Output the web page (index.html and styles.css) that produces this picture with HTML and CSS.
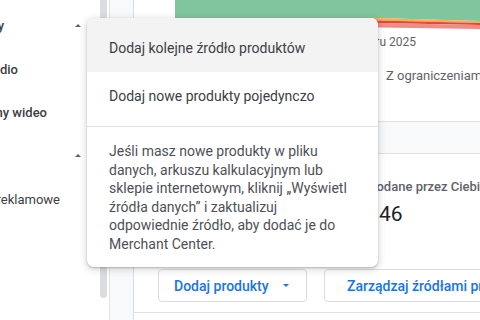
FILE: index.html
```html
<!DOCTYPE html>
<html lang="pl">
<head>
    <meta charset="UTF-8">
    <meta name="viewport" content="width=device-width, initial-scale=1.0">
    <title>Produkty - Merchant Center</title>
    <link rel="stylesheet" href="styles.css">
</head>
<body>

    <!-- Side navigation (scrolled, only the right edge is visible) -->
    <nav class="sidenav">
        <div class="nav-row nav-head"><span class="nav-label">Produkty</span><span class="caret-up"></span></div>
        <div class="nav-row"><span class="nav-label strong">Studio</span></div>
        <div class="nav-row"><span class="nav-label strong">Filmy wideo</span></div>
        <div class="nav-row nav-head"><span class="nav-label">Marketing</span><span class="caret-up"></span></div>
        <div class="nav-row"><span class="nav-label">Materiały reklamowe</span></div>
    </nav>
    <div class="scroll-track"><div class="scroll-thumb"></div></div>

    <!-- Main content -->
    <main class="main">
        <section class="card">
            <div class="chart">
                <svg width="305" height="30" viewBox="0 0 305 30">
                    <path d="M0 0 H305 V21 L203 18 H0 Z" fill="#7fc59d"/>
                    <path d="M0 18 H203 L305 21 V23 L203 20.5 H0 Z" fill="#f5b04a"/>
                    <path d="M0 20.5 H203 L305 23 V25 L203 23 H0 Z" fill="#e8453c"/>
                    <path d="M0 23 H203 L305 25 V29 L203 27.5 H0 Z" fill="#f08c86"/>
                </svg>
            </div>
            <div class="chart-caption">Dane z pomiaru 2025</div>
            <div class="legend">
                <span class="legend-item">Z ograniczeniami</span>
            </div>

            <div class="table-band"></div>

            <div class="stats">
                <div class="stat">
                    <p class="stat-label">Dodane przez Ciebie</p>
                    <p class="stat-value">46</p>
                </div>
            </div>

            <div class="actions">
                <button class="btn-outline btn-first">Dodaj produkty <span class="caret-down"></span></button>
                <button class="btn-outline">Zarządzaj źródłami produktów</button>
            </div>
        </section>
    </main>

    <!-- Add products menu -->
    <div class="menu">
        <ul class="menu-list">
            <li class="menu-item active">Dodaj kolejne źródło produktów</li>
            <li class="menu-item">Dodaj nowe produkty pojedynczo</li>
        </ul>
        <p class="menu-note">Jeśli masz nowe produkty w pliku danych, arkuszu kalkulacyjnym lub sklepie internetowym, kliknij „Wyświetl źródła danych” i zaktualizuj odpowiednie źródło, aby dodać je do Merchant Center.</p>
    </div>

</body>
</html>
```

FILE: styles.css
```css
/* Global Styles */
body {
    font-family: Roboto, "Liberation Sans", Arial, sans-serif;
    margin: 0;
    padding: 0;
    width: 480px;
    height: 320px;
    overflow: hidden;
    display: flex;
    background-color: #fff;
    color: #3c4043;
}

p {
    margin: 0;
}

/* Side navigation */
.sidenav {
    width: 100px;
    flex-shrink: 0;
    padding-top: 4px;
    display: flex;
    flex-direction: column;
    overflow: hidden;
}

.nav-row {
    height: 43.5px;
    display: flex;
    align-items: center;
    justify-content: flex-end;
    position: relative;
    font-size: 13px;
    white-space: nowrap;
}

.nav-label {
    width: 100px;
    display: flex;
    justify-content: flex-end;
    box-sizing: border-box;
}

.nav-row:nth-child(1) .nav-label { padding-right: 96px; }
.nav-row:nth-child(2) .nav-label { padding-right: 82px; }
.nav-row:nth-child(3) .nav-label { padding-right: 53px; }
.nav-row:nth-child(4) .nav-label { padding-right: 140px; }
.nav-row:nth-child(5) .nav-label { padding-right: 40px; }

.nav-label.strong,
.nav-head .nav-label {
    font-weight: 500;
}

.caret-up {
    position: absolute;
    left: 75px;
    top: 50%;
    margin-top: -2px;
    width: 0;
    height: 0;
    border-left: 3.5px solid transparent;
    border-right: 3.5px solid transparent;
    border-bottom: 3.5px solid #5f6368;
}

.scroll-track {
    width: 9px;
    flex-shrink: 0;
}

.scroll-thumb {
    width: 7px;
    height: 298px;
    background-color: #dadce0;
    border-radius: 0 0 4px 4px;
}

/* Main */
.main {
    flex: 1;
    border-left: 1px solid #e3e3e3;
    background-color: #f8f9fa;
    padding-left: 23px;
    display: flex;
    overflow: hidden;
}

.card {
    flex: 1;
    background-color: #fff;
    border-left: 1px solid #dadce0;
    display: flex;
    flex-direction: column;
}

.chart {
    margin-left: 41px;
    height: 30px;
}

.chart svg {
    display: block;
}

.chart-caption {
    width: 282px;
    height: 24px;
    line-height: 24px;
    font-size: 12px;
    color: #5f6368;
    text-align: right;
    white-space: nowrap;
}

.legend {
    height: 42px;
    display: flex;
    align-items: center;
    padding-left: 252px;
    font-size: 13px;
    color: #5f6368;
    white-space: nowrap;
}

.table-band {
    margin-top: 25px;
    height: 31px;
    background-color: #f8f9fa;
    border-top: 1px solid #e0e0e0;
    border-bottom: 1px solid #e0e0e0;
}

.stats {
    padding: 24px 0 0 234px;
    height: 91px;
    white-space: nowrap;
}

.stat-label {
    font-size: 13px;
    font-weight: 500;
    line-height: 18px;
    color: #5f6368;
}

.stat-value {
    margin-top: 3px;
    padding-left: 11px;
    font-size: 21px;
    line-height: 30px;
    color: #202124;
}

/* Buttons */
.actions {
    display: flex;
    gap: 17px;
    padding-left: 24px;
    padding-bottom: 10px;
    border-bottom: 1px solid #e0e0e0;
}

.btn-outline {
    height: 33px;
    padding: 0 22px;
    font-family: Roboto, "Liberation Sans", Arial, sans-serif;
    font-size: 14px;
    font-weight: 500;
    color: #1a73e8;
    background-color: #fff;
    border: 1px solid #dadce0;
    border-radius: 4px;
    white-space: nowrap;
    display: flex;
    align-items: center;
    flex-shrink: 0;
}

.btn-first {
    width: 149px;
    padding: 0 0 0 15px;
}

.caret-down {
    margin-left: 14px;
    width: 0;
    height: 0;
    border-left: 3.5px solid transparent;
    border-right: 3.5px solid transparent;
    border-top: 3.5px solid #1a73e8;
}

/* Menu overlay */
.menu {
    position: absolute;
    left: 87px;
    top: 18px;
    width: 291px;
    background-color: #fff;
    border-radius: 7px;
    box-shadow: 0 1px 2px rgba(60, 64, 67, 0.3), 0 2px 6px 2px rgba(60, 64, 67, 0.15);
    overflow: hidden;
}

.menu-list {
    list-style: none;
    margin: 0;
    padding: 0 0 6px;
    border-bottom: 1px solid #e0e0e0;
}

.menu-item {
    height: 48px;
    display: flex;
    align-items: center;
    padding-left: 22px;
    font-size: 14px;
    color: #3c4043;
}

.menu-item.active {
    padding-top: 6px;
    background-color: #f3f3f3;
}

.menu-note {
    padding: 15px 24px 14px 22px;
    font-size: 14px;
    line-height: 18.5px;
    color: #4d5156;
}
```
